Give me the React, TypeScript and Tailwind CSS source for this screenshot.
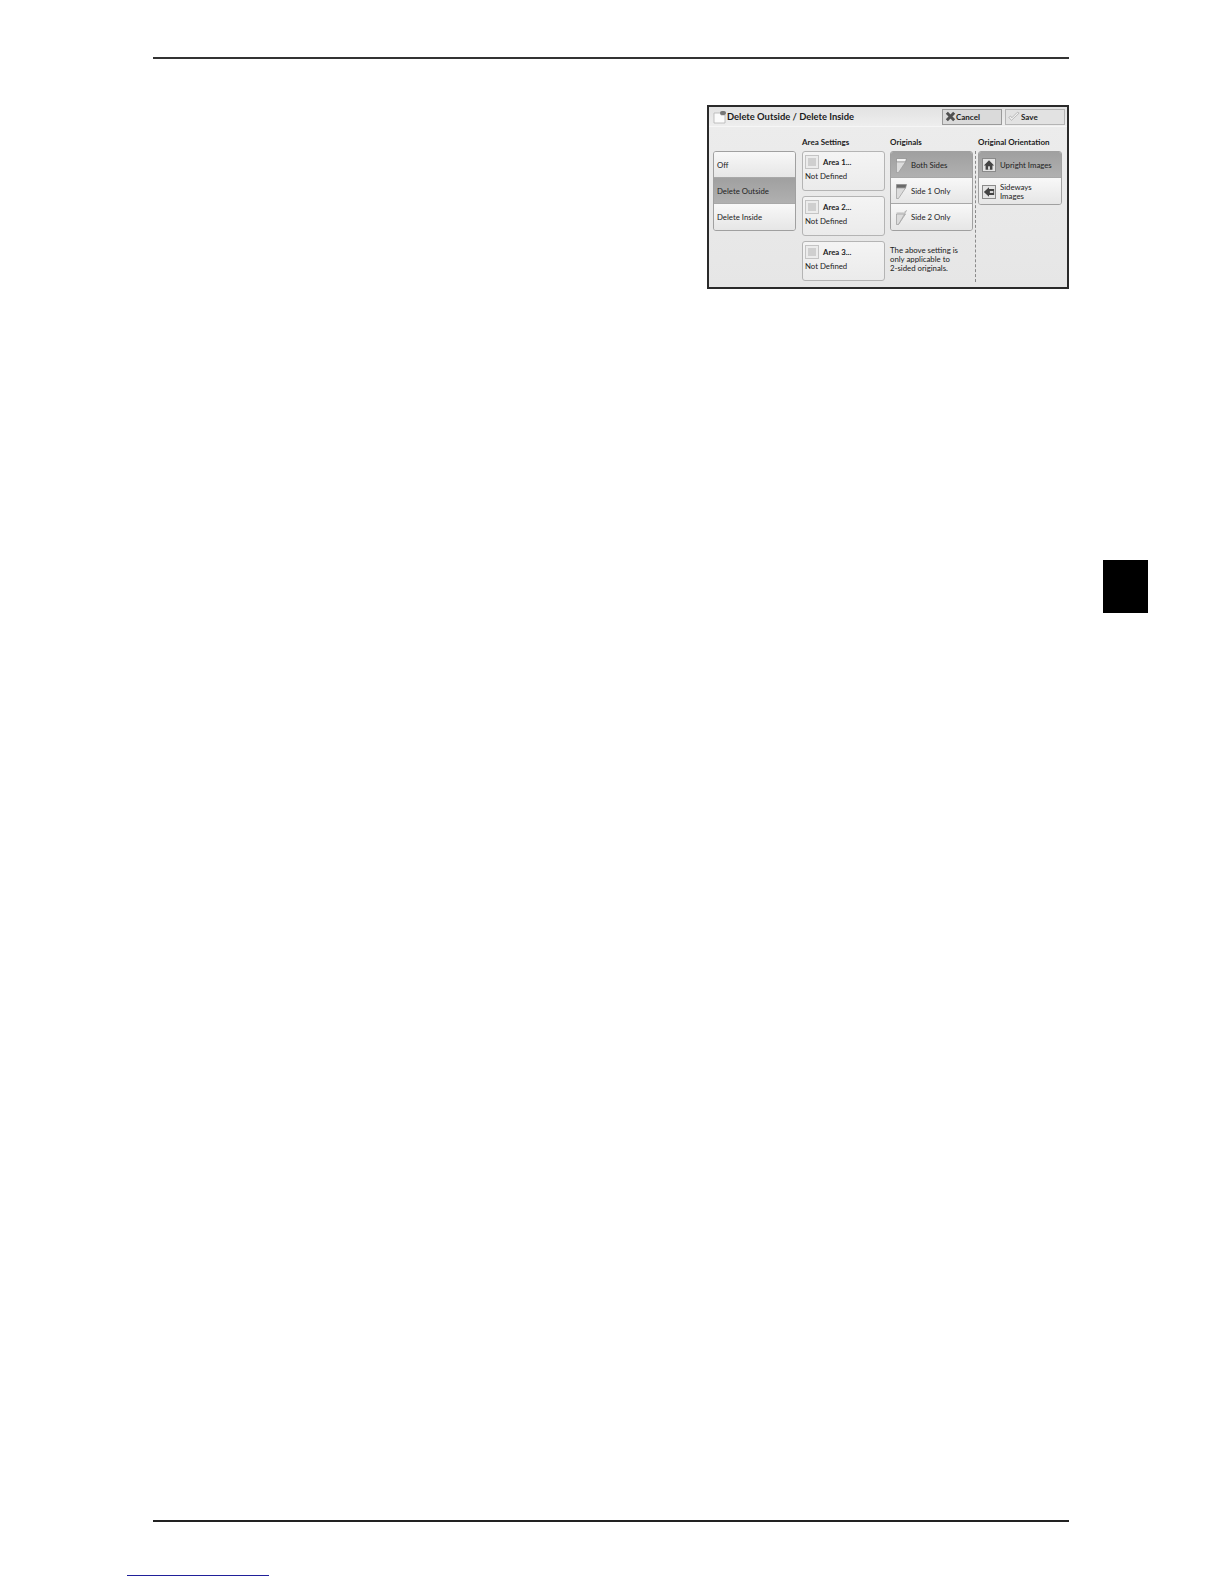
import React from "react";

const font = "font-['Lato',sans-serif]";

const PageIcon: React.FC<{ mark?: "both" | "one" | "two" }> = ({ mark = "both" }) => (
  <svg viewBox="0 0 11 15" className="h-[15px] w-[11px] shrink-0">
    {mark !== "two" && (
      <path d="M0.5 0.5h10l-1 3.5H0.5z" fill={mark === "one" ? "#6a6a6a" : "#f4f4f4"} stroke="#8a8a8a" strokeWidth="0.7" />
    )}
    <path d="M0.5 4v10.5h2L9.5 4z" fill="#dcdcdc" stroke="#9a9a9a" strokeWidth="0.7" />
    {mark === "two" && <path d="M0.5 3h7l3-2.5-8 14" fill="none" stroke="#a8a8a8" strokeWidth="0.7" />}
  </svg>
);

const OrientationBox: React.FC<{ children: React.ReactNode }> = ({ children }) => (
  <span className="mr-[4px] flex h-[14px] w-[14px] shrink-0 items-center justify-center border border-[#8a8a8a] bg-[#e4e4e4]">
    <svg viewBox="0 0 14 13" className="h-[12px] w-[12px]">
      {children}
    </svg>
  </span>
);

const ListButton: React.FC<{ label: React.ReactNode; selected?: boolean; children?: React.ReactNode }> = ({
  label,
  selected,
  children,
}) => (
  <div
    className={`flex h-[26px] items-center border-b border-[#a8a8a8] px-[3px] pt-[1px] text-[7.8px] leading-[9px] text-[#222] last:border-b-0 ${
      selected ? "bg-gradient-to-b from-[#a0a0a0] to-[#b0b0b0]" : "bg-gradient-to-b from-[#f8f8f8] to-[#e6e6e6]"
    }`}
  >
    {children}
    <span>{label}</span>
  </div>
);

const ListGroup: React.FC<{ children: React.ReactNode }> = ({ children }) => (
  <div className="overflow-hidden rounded-[3px] border border-[#a0a0a0]">{children}</div>
);

const AreaButton: React.FC<{ label: string }> = ({ label }) => (
  <div className="h-[40px] rounded-[3px] border border-[#b4b4b4] bg-gradient-to-b from-[#f4f4f4] to-[#ebebeb] pl-[2px] pt-[3px] text-[7.8px] leading-[10px] text-[#222]">
    <div className="flex items-center">
      <span className="flex h-[14px] w-[14px] items-center justify-center border border-[#c4c4c4] bg-[#ececec]">
        <span className="h-[8px] w-[8px] bg-[#cfcfcf]" />
      </span>
      <span className="ml-[4px] font-bold">{label}</span>
    </div>
    <div className="mt-[2px]">Not Defined</div>
  </div>
);

const Heading: React.FC<{ children: React.ReactNode }> = ({ children }) => (
  <div className="mb-[4px] h-[10px] text-[8px] font-bold leading-[10px] text-[#222]">{children}</div>
);

export default function App() {
  return (
    <div className={`h-[1584px] w-[1224px] overflow-hidden bg-white ${font}`}>
      {/* Header rule */}
      <div className="ml-[153px] mt-[57px] h-[2px] w-[916px] bg-[#333]" />

      {/* Dialog screenshot */}
      <div className="ml-[707px] mt-[46px] h-[184px] w-[362px] border-2 border-[#2a2a2a] bg-[#e9e9e9]">
        <div className="flex h-[20px] items-center border-b border-[#f6f6f6] bg-gradient-to-b from-[#e2e2e2] to-[#eeeeee] pl-[4px] pr-[2px]">
          <svg viewBox="0 0 14 14" className="h-[14px] w-[14px] shrink-0">
            <path d="M1 3h7v2h4v8H1z" fill="#fbfbfb" stroke="#b4b4b4" strokeWidth="0.8" />
            <rect x="7" y="1" width="6" height="4" rx="2" fill="#777" />
          </svg>
          <span className="text-[9.4px] font-bold leading-none text-[#1c1c1c]">Delete Outside / Delete Inside</span>
          <div className="ml-auto flex gap-[3px]">
            <div className="flex h-[16px] w-[60px] items-center border border-[#9a9a9a] bg-[#dadada] pl-[2px] text-[8px] font-bold text-[#222]">
              <svg viewBox="0 0 12 12" className="h-[11px] w-[11px] shrink-0">
                <path d="M2 2 L10 10 M10 2 L2 10" stroke="#505050" strokeWidth="3.2" />
              </svg>
              <span>Cancel</span>
            </div>
            <div className="flex h-[16px] w-[60px] items-center border border-[#b4b4b4] bg-[#e2e2e2] pl-[2px] text-[8px] font-bold text-[#222]">
              <svg viewBox="0 0 14 12" className="h-[11px] w-[12px] shrink-0">
                <path d="M1 7 L4 10.5 L13 2 L11 1 L4.5 7.5 L3 5.5 Z" fill="#f2f2f2" stroke="#9a9a9a" strokeWidth="0.7" />
              </svg>
              <span className="ml-[1px]">Save</span>
            </div>
          </div>
        </div>

        <div className="flex h-[160px] bg-gradient-to-b from-[#ececec] to-[#e6e6e6] pl-[4px] pt-[10px]">
          <div className="w-[83px] pt-[14px]">
            <ListGroup>
              <ListButton label="Off" />
              <ListButton label="Delete Outside" selected />
              <ListButton label="Delete Inside" />
            </ListGroup>
          </div>

          <div className="ml-[6px] w-[83px]">
            <Heading>Area Settings</Heading>
            <div className="flex flex-col gap-[5px]">
              <AreaButton label="Area 1..." />
              <AreaButton label="Area 2..." />
              <AreaButton label="Area 3..." />
            </div>
          </div>

          <div className="ml-[5px] w-[83px]">
            <Heading>Originals</Heading>
            <ListGroup>
              <ListButton label="Both Sides" selected>
                <span className="ml-[2px] mr-[4px] flex">
                  <PageIcon mark="both" />
                </span>
              </ListButton>
              <ListButton label="Side 1 Only">
                <span className="ml-[2px] mr-[4px] flex">
                  <PageIcon mark="one" />
                </span>
              </ListButton>
              <ListButton label="Side 2 Only">
                <span className="ml-[2px] mr-[4px] flex">
                  <PageIcon mark="two" />
                </span>
              </ListButton>
            </ListGroup>
            <p className="mt-[15px] text-[7.8px] leading-[9px] text-[#222]">
              The above setting is
              <br />
              only applicable to
              <br />
              2-sided originals.
            </p>
          </div>

          <div className="ml-[1.5px] mt-[14px] h-[131px] border-l border-dashed border-[#8a8a8a]" />

          <div className="ml-[2.5px] w-[84px]">
            <Heading>Original Orientation</Heading>
            <ListGroup>
              <ListButton label="Upright Images" selected>
                <OrientationBox>
                  <path d="M7 1 L13 7 H11 V12 H3 V7 H1 Z" fill="#444" />
                  <rect x="6" y="8" width="2" height="4" fill="#eee" />
                </OrientationBox>
              </ListButton>
              <ListButton
                label={
                  <>
                    Sideways
                    <br />
                    Images
                  </>
                }
              >
                <OrientationBox>
                  <path d="M1 6.5 L7 1 V3 H13 V10 H7 V12 Z" fill="#444" />
                  <rect x="8" y="5.5" width="4" height="2" fill="#eee" />
                </OrientationBox>
              </ListButton>
            </ListGroup>
          </div>
        </div>
      </div>

      {/* Chapter tab */}
      <div className="ml-[1103px] mt-[271px] h-[53px] w-[45px] bg-black" />

      {/* Footer rule */}
      <div className="ml-[153px] mt-[907px] h-[2px] w-[916px] bg-[#222]" />

      {/* Link underline */}
      <div className="ml-[127px] mt-[53px] h-px w-[142px] bg-[#20209a]" />
    </div>
  );
}
